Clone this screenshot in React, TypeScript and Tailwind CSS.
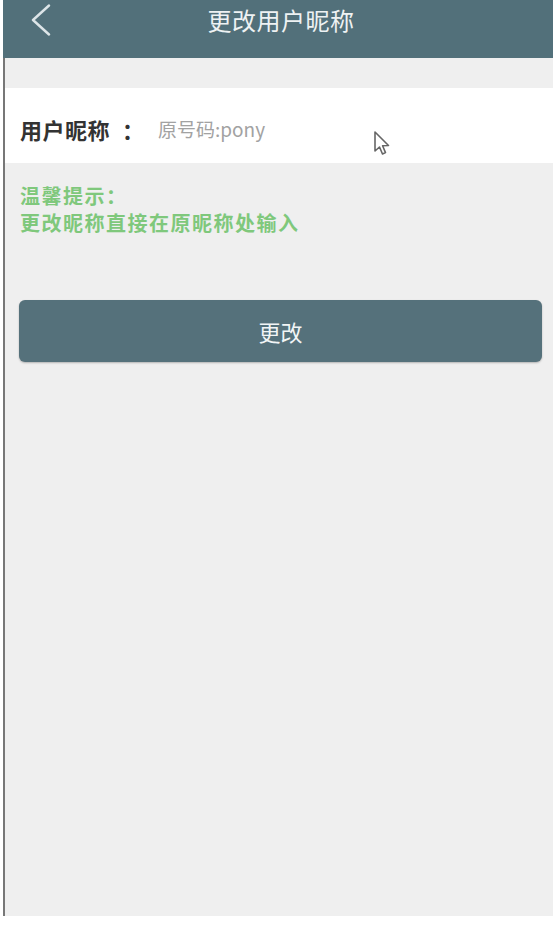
const font = '"Noto Sans CJK SC", "Noto Sans", Roboto, sans-serif';

function Header() {
  return (
    <div className="relative h-[58px] bg-[#52707a]">
      <svg className="absolute left-[27px] top-[4px]" width="22" height="32" viewBox="0 0 22 32" fill="none">
        <polyline
          points="19,1.5 3,16 19,30.5"
          stroke="#dde5e8"
          strokeWidth="2.4"
          strokeLinecap="round"
          strokeLinejoin="round"
        />
      </svg>
      <div className="pl-[6px] pt-[5px] text-center text-[24px] leading-[30px] tracking-[0.5px] text-[#eef2f3]">更改用户昵称</div>
    </div>
  );
}

function CursorMark() {
  // mouse pointer captured in the screenshot
  return (
    <svg
      className="pointer-events-none absolute left-[367px] top-[42px]"
      width="20"
      height="28"
      viewBox="0 0 20 28"
      fill="none"
    >
      <path
        d="M3 2 L3 21 L7.5 17 L10.5 24 L13.5 22.6 L10.6 15.8 L16.5 15.5 Z"
        stroke="#666"
        strokeWidth="1.6"
        strokeLinejoin="round"
        fill="#fff"
      />
    </svg>
  );
}

export default function App() {
  return (
    <div className="h-[936px] w-full bg-white" style={{ fontFamily: font }}>
      <div className="ml-[3px] flex h-[916px] w-[550px] flex-col">
        <Header />
        <div className="flex-1 border-l-2 border-[#777] bg-[#efefef]">
          <div className="relative mt-[30px] flex h-[75px] items-center bg-white pl-[15px] pt-[8px]">
            <span className="text-[22px] font-bold tracking-[0.5px] text-[#333]">用户昵称</span>
            <span className="ml-[12px] text-[22px] font-bold text-[#333]">：</span>
            <input
              className="ml-[14px] w-[220px] bg-transparent text-[19px] text-[#555] outline-none placeholder:text-[#a2a2a2]"
              placeholder="原号码:pony"
            />
            <CursorMark />
          </div>
          <div className="mt-[19px] pl-[15px] text-[20px] font-semibold leading-[27px] tracking-[1.5px] text-[#7fc87c]">
            <div>温馨提示：</div>
            <div>更改昵称直接在原昵称处输入</div>
          </div>
          <button className="ml-[14px] mt-[64px] flex h-[62px] w-[523px] items-center justify-center rounded-[6px] bg-[#55717b] text-[22px] text-[#f2f5f6] shadow-[0_1px_2px_rgba(0,0,0,0.25)]">
            更改
          </button>
        </div>
      </div>
    </div>
  );
}
